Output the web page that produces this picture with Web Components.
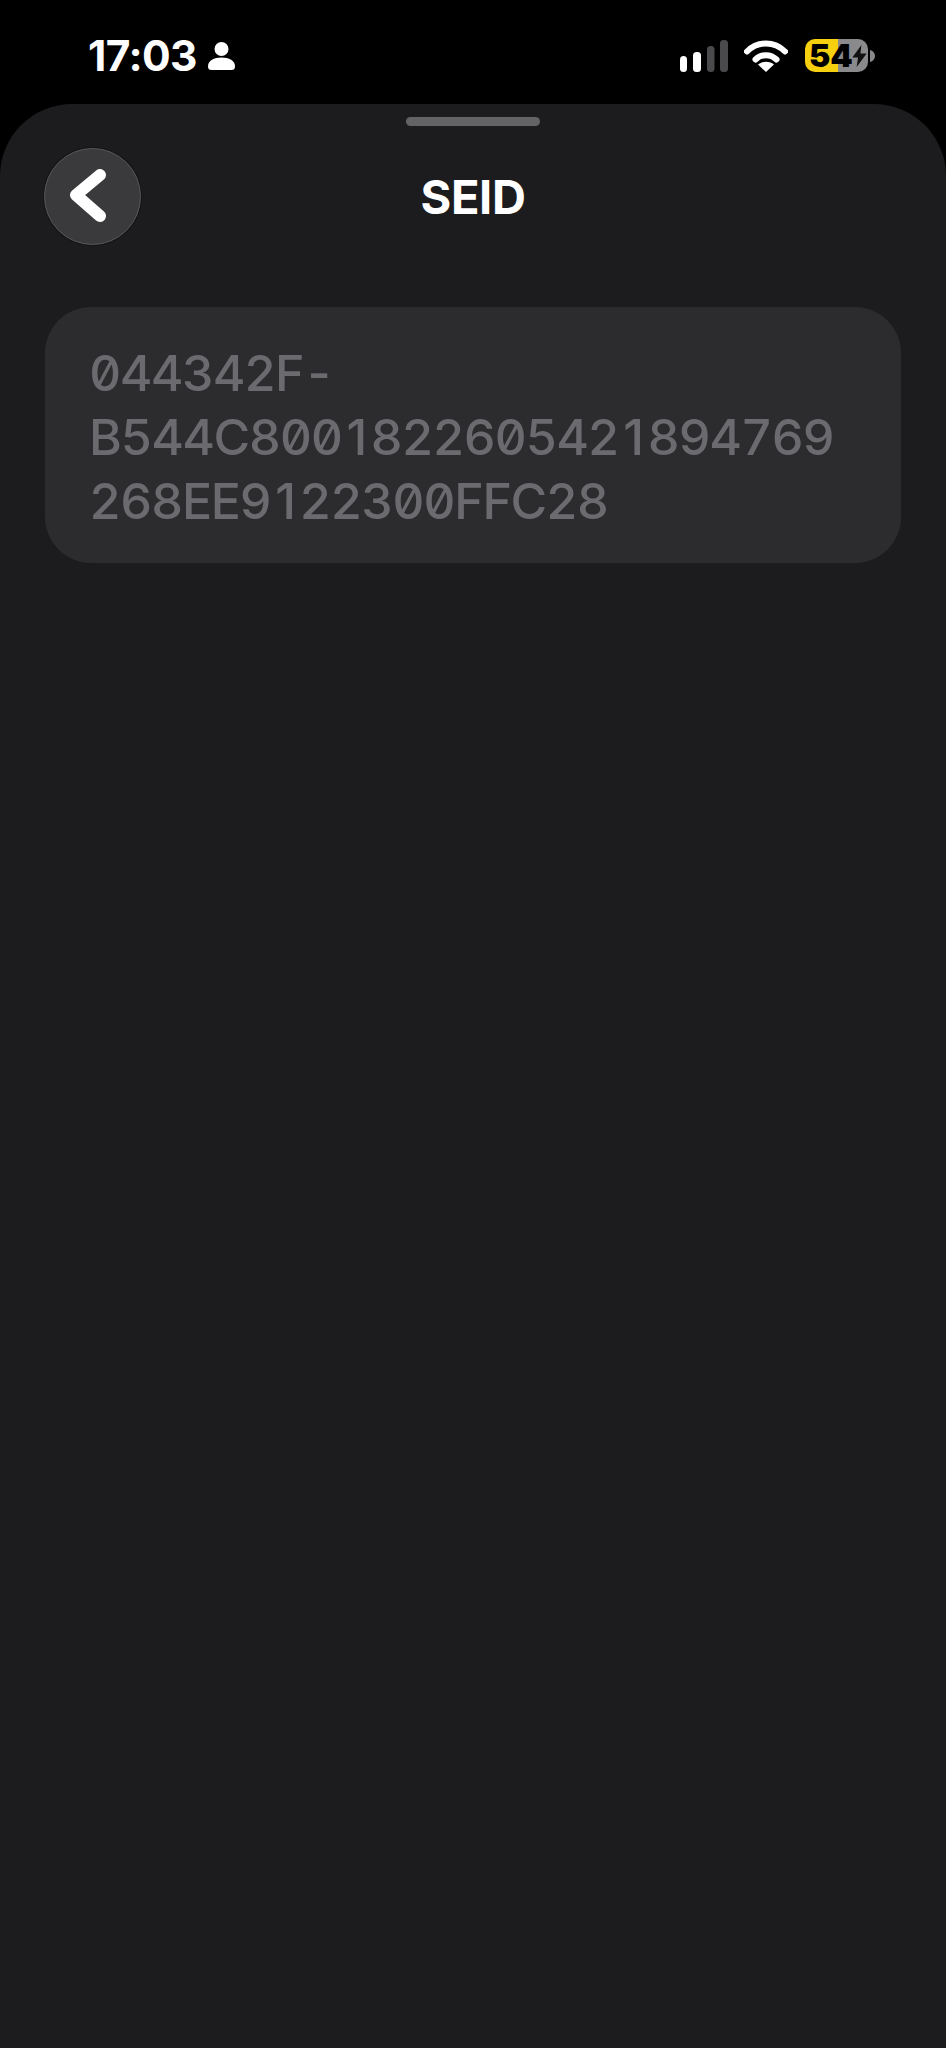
<!DOCTYPE html>
<html lang="en"><head><meta charset="utf-8"><title>SEID</title>
<style>
html,body{margin:0;padding:0;background:#000}
body{width:946px;height:2048px;overflow:hidden;font-family:Inter,"Liberation Sans",sans-serif}
</style></head><body>
<seid-screen></seid-screen>
<script>
function def(name, html){
  customElements.define(name, class extends HTMLElement{
    constructor(){super();this.attachShadow({mode:'open'}).innerHTML=html;}
  });
}
def('status-bar',`<style>
:host{display:flex;align-items:flex-start;justify-content:space-between;height:104px;box-sizing:border-box;padding:39px 71px 0 88px;background:#000;color:#fff}
.l,.r{display:flex;align-items:center;height:33px}
.time{font:700 42.500px/33px Inter,sans-serif;letter-spacing:-.6px}
.l svg{margin-left:11px;display:block}
.r svg{display:block}
.wifi{margin-left:16px}
.bat{margin-left:17px;position:relative;width:63px;height:33px;border-radius:10px;background:linear-gradient(90deg,#f6cf0f 0 33px,#8a8a8d 33px);display:flex;align-items:center}
.num{font:900 32px/33px Inter,sans-serif;color:#000;padding-left:4px;letter-spacing:0}
.bolt{position:absolute;left:47px;top:6px}
.nub{margin-left:2px}
</style>
<div class="l"><span class="time">17:03</span>
<svg width="27" height="28" viewBox="0 0 27 28"><circle cx="13.5" cy="7" r="7" fill="#fff"/><path d="M0 24.5C0 18.5 6 15.6 13.500 15.6S27 18.5 27 24.5C27 27 25.8 28 23.5 28H3.5C1.2 28 0 27 0 24.5Z" fill="#fff"/></svg></div>
<div class="r">
<svg width="48" height="32" viewBox="0 0 48 32"><rect x="0" y="16" width="7" height="16" rx="3.5" fill="#fff"/><rect x="13" y="12" width="8" height="20" rx="3.5" fill="#fff"/><rect x="27" y="6" width="7.5" height="26" rx="3.5" fill="#4a4a4c"/><rect x="40" y="0" width="8" height="32" rx="3.5" fill="#4a4a4c"/></svg>
<svg class="wifi" width="44" height="33" viewBox="0 0 44 33"><path d="M3 12.5C8 7.5 14.6 4.5 22 4.5S36 7.500 41 12.500" fill="none" stroke="#fff" stroke-width="6" stroke-linecap="round"/><path d="M11.500 20.500C14.300 17.800 18 16.200 22 16.200S29.700 17.800 32.500 20.500" fill="none" stroke="#fff" stroke-width="6" stroke-linecap="round"/><path d="M22 33L14 25.500C16 23.800 19 22.800 22 22.800S28 23.800 30 25.500Z" fill="#fff"/></svg>
<div class="bat"><span class="num">54</span>
<svg class="bolt" width="15" height="22" viewBox="0 0 15 23"><path d="M9.500 0L0 13H6L4.500 23L15 9H8.500Z" fill="#111"/></svg></div>
<svg class="nub" width="5" height="12" viewBox="0 0 5 12"><path d="M0 0C3 .8 5 3 5 6S3 11.200 0 12Z" fill="#8a8a8d"/></svg>
</div>`);
def('sheet-handle',`<style>
:host{display:block;width:134px;height:9px;border-radius:5px;background:#636366;margin:13px auto 0}
</style>`);
def('back-button',`<style>
:host{display:block;width:97px;height:97px;box-sizing:border-box;border-radius:50%;background:#3a3a3c;border:1.500px solid #58585a;box-shadow:0 0 0 1px #151517}
svg{display:block;margin:18px auto 0 21px}
</style><svg width="44" height="58" viewBox="0 0 44 58"><path d="M33 9L9 29L33 50" transform="translate(1 -1)" fill="none" stroke="#fff" stroke-width="12" stroke-linecap="round" stroke-linejoin="round"/></svg>`);
def('nav-header',`<style>
:host{display:grid;grid-template-columns:97px 1fr 97px;align-items:center;padding:22px 44px 0}
h1{margin:0;text-align:center;font:700 47px/97px Inter,sans-serif;color:#fff;letter-spacing:-.4px}
</style><slot name="lead"></slot><h1><slot></slot></h1><span></span>`);
def('value-card',`<style>
:host{display:block;margin:62px 45px 0;padding:34px 44px 30px;background:#2c2c2e;border-radius:46px;color:#6b6b6f;font:550 50px/64px Inter,sans-serif;letter-spacing:-1.400px;font-feature-settings:"tnum","zero";white-space:nowrap}
</style><slot></slot>`);
const mark = s => s.replace(/1/g,'<span class="one">1</span>');
def('seid-screen',`<style>
:host{display:block;width:946px;height:2048px;background:#000}
.sheet{height:1944px;background:#1c1c1e;border-radius:72px 72px 0 0;overflow:hidden}
.one{font-feature-settings:"zero";padding:0 .095em}
.ln{display:block}
</style>
<status-bar></status-bar>
<div class="sheet"><sheet-handle></sheet-handle>
<nav-header><back-button slot="lead"></back-button>SEID</nav-header>
<value-card><span class="ln">044342F-</span><span class="ln">${mark('B544C8001822605421894769')}</span><span class="ln">${mark('268EE9122300FFC28')}</span></value-card></div>`);
</script>
</body></html>
